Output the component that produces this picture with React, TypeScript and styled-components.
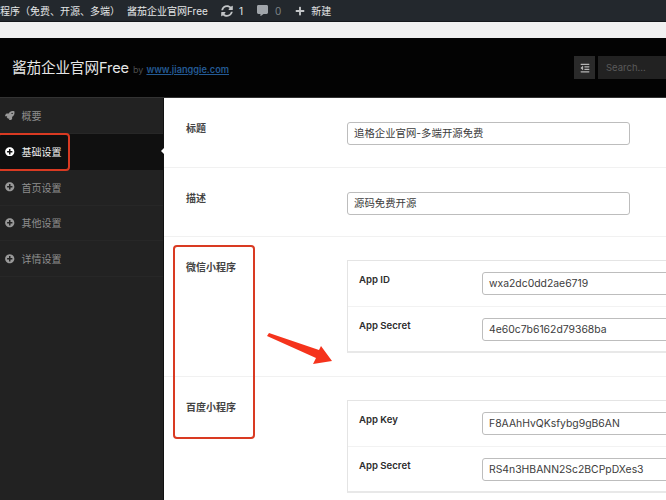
import React from 'react';
import styled, { createGlobalStyle } from 'styled-components';
import { FaRocket, FaPlusCircle, FaSyncAlt, FaCommentAlt, FaPlus, FaOutdent } from 'react-icons/fa';

const GlobalStyle = createGlobalStyle`
  html, body {
    margin: 0;
    padding: 0;
    background: #fff;
    overflow: hidden;
  }
  * {
    box-sizing: border-box;
  }
`;

const font = `Inter, "Noto Sans CJK SC", "Liberation Sans", sans-serif`;

const Page = styled.div`
  position: relative;
  width: 666px;
  height: 500px;
  overflow: hidden;
  font-family: ${font};
`;

const AdminBar = styled.div`
  height: 22px;
  background: #23282d;
  border-bottom: 1px solid #15181b;
  display: flex;
  align-items: center;
  color: #e4e6e7;
  font-size: 10px;
  white-space: nowrap;
`;

const BarItem = styled.span<{ $left: number; $dim?: boolean }>`
  display: flex;
  align-items: center;
  gap: ${(p) => (p.$dim ? 7 : 6)}px;
  margin-left: ${(p) => p.$left}px;
  color: ${(p) => (p.$dim ? '#7d8387' : '#e4e6e7')};
  svg {
    color: ${(p) => (p.$dim ? '#a0a5aa' : '#c3c6c8')};
  }
`;

const Strip = styled.div`
  height: 16px;
  background: #f1f1f1;
`;

const Header = styled.div`
  height: 60px;
  background: #030303;
  border-bottom: 1px solid #333;
  display: flex;
  align-items: center;
  padding: 0 0 0 12px;
  white-space: nowrap;
`;

const HeaderTitle = styled.div`
  display: flex;
  align-items: baseline;
  margin-top: -2px;
`;

const Brand = styled.span`
  color: #e6e6e6;
  font-size: 14.6px;
  letter-spacing: -0.1px;
`;

const By = styled.span`
  color: #4d4d4d;
  font-size: 9px;
  margin-left: 4px;
`;

const SiteLink = styled.a`
  color: #235a94;
  font-size: 9.2px;
  font-weight: 600;
  margin-left: 3px;
  text-decoration: underline;
`;

const SearchGroup = styled.div`
  margin-left: auto;
  display: flex;
  gap: 3px;
  height: 23px;
  width: 92px;
  flex-shrink: 0;
`;

const ToggleButton = styled.div`
  width: 21px;
  background: #2a2a2a;
  color: #b5b5b5;
  display: flex;
  align-items: center;
  justify-content: center;
  font-size: 10px;
`;

const SearchBox = styled.div`
  flex: 1;
  background: #222;
  color: #5a5a5a;
  font-size: 9.5px;
  line-height: 23px;
  padding-left: 8px;
`;

const Body = styled.div`
  display: flex;
  height: 402px;
`;

const Sidebar = styled.div`
  width: 164px;
  flex-shrink: 0;
  background: #222;
  border-right: 1px solid #111;
`;

const MenuItem = styled.div<{ $active?: boolean }>`
  position: relative;
  height: 35.85px;
  display: flex;
  align-items: center;
  gap: 7px;
  padding-left: 5px;
  font-size: 10px;
  background: ${(p) => (p.$active ? '#101010' : 'transparent')};
  color: ${(p) => (p.$active ? '#f2f2f2' : '#8e8e8e')};
  border-bottom: 1px solid ${(p) => (p.$active ? '#101010' : '#272727')};
  svg {
    color: ${(p) => (p.$active ? '#fff' : '#999')};
    font-size: 9.5px;
  }
  ${(p) =>
    p.$active &&
    `&::after {
      content: '';
      position: absolute;
      right: -1px;
      top: 50%;
      margin-top: -3px;
      border: 3px solid transparent;
      border-right-color: #fff;
    }`}
`;

const Content = styled.div`
  flex: 1;
  min-width: 0;
  background: #fff;
`;

const Row = styled.div<{ $height: number }>`
  height: ${(p) => p.$height}px;
  display: flex;
  align-items: flex-start;
  padding: 24px 0 0 22px;
  border-bottom: 1px solid #f1f1f1;
`;

const RowLabel = styled.div`
  width: 161px;
  flex-shrink: 0;
  margin-top: -1px;
  color: #444;
  font-size: 10px;
  font-weight: 600;
  line-height: 14px;
`;

const TextInput = styled.div<{ $width: number }>`
  width: ${(p) => p.$width}px;
  height: 23px;
  flex-shrink: 0;
  border: 1px solid #bdbdbd;
  border-radius: 3px;
  background: #fff;
  color: #3c3c3c;
  font-size: 10.4px;
  line-height: 21px;
  padding-left: 6px;
  white-space: nowrap;
`;

const Card = styled.div`
  width: 400px;
  flex-shrink: 0;
  margin-top: -1px;
  background: #fff;
  border: 1px solid #e4e4e4;
  border-bottom: 2px solid #e8e8e8;
`;

const CardRow = styled.div`
  height: 45px;
  display: flex;
  align-items: flex-start;
  padding: 11px 0 0 11px;
  & + & {
    border-top: 1px solid #f2f2f2;
  }
`;

const CardLabel = styled.div`
  width: 123px;
  flex-shrink: 0;
  margin-top: 1px;
  color: #2c2c2c;
  font-size: 9.6px;
  font-weight: 600;
  line-height: 14px;
`;

const Highlight = styled.div<{ $x: number; $y: number; $w: number; $h: number }>`
  position: absolute;
  left: ${(p) => p.$x}px;
  top: ${(p) => p.$y}px;
  width: ${(p) => p.$w}px;
  height: ${(p) => p.$h}px;
  border: 2px solid #d93a22;
  border-radius: 4px;
  pointer-events: none;
`;

const Arrow = styled.svg`
  position: absolute;
  left: 262px;
  top: 328px;
`;

const App: React.FC = () => {
  return (
    <Page>
      <GlobalStyle />
      <AdminBar>
        <BarItem $left={0}>程序（免费、开源、多端）</BarItem>
        <BarItem $left={7}>酱茄企业官网Free</BarItem>
        <BarItem $left={13}>
          <FaSyncAlt size={12} />1
        </BarItem>
        <BarItem $left={14} $dim>
          <FaCommentAlt size={11} />0
        </BarItem>
        <BarItem $left={14}>
          <FaPlus size={10} />新建
        </BarItem>
      </AdminBar>
      <Strip />
      <Header>
        <HeaderTitle>
          <Brand>酱茄企业官网Free</Brand>
          <By>by</By>
          <SiteLink>www.jianggie.com</SiteLink>
        </HeaderTitle>
        <SearchGroup>
          <ToggleButton>
            <FaOutdent />
          </ToggleButton>
          <SearchBox>Search...</SearchBox>
        </SearchGroup>
      </Header>
      <Body>
        <Sidebar>
          <MenuItem>
            <FaRocket />
            概要
          </MenuItem>
          <MenuItem $active>
            <FaPlusCircle />
            基础设置
          </MenuItem>
          <MenuItem>
            <FaPlusCircle />
            首页设置
          </MenuItem>
          <MenuItem>
            <FaPlusCircle />
            其他设置
          </MenuItem>
          <MenuItem>
            <FaPlusCircle />
            详情设置
          </MenuItem>
        </Sidebar>
        <Content>
          <Row $height={70}>
            <RowLabel>标题</RowLabel>
            <TextInput $width={283}>追格企业官网-多端开源免费</TextInput>
          </Row>
          <Row $height={69}>
            <RowLabel>描述</RowLabel>
            <TextInput $width={283}>源码免费开源</TextInput>
          </Row>
          <Row $height={140}>
            <RowLabel>微信小程序</RowLabel>
            <Card>
              <CardRow>
                <CardLabel>App ID</CardLabel>
                <TextInput $width={300}>wxa2dc0dd2ae6719</TextInput>
              </CardRow>
              <CardRow>
                <CardLabel>App Secret</CardLabel>
                <TextInput $width={300}>4e60c7b6162d79368ba</TextInput>
              </CardRow>
            </Card>
          </Row>
          <Row $height={124}>
            <RowLabel>百度小程序</RowLabel>
            <Card>
              <CardRow>
                <CardLabel>App Key</CardLabel>
                <TextInput $width={300}>F8AAhHvQKsfybg9gB6AN</TextInput>
              </CardRow>
              <CardRow>
                <CardLabel>App Secret</CardLabel>
                <TextInput $width={300}>RS4n3HBANN2Sc2BCPpDXes3</TextInput>
              </CardRow>
            </Card>
          </Row>
        </Content>
      </Body>
      <Highlight $x={-3} $y={133} $w={73} $h={38} />
      <Highlight $x={173} $y={245} $w={82} $h={194} />
      <Arrow width="76" height="40" viewBox="0 0 76 40">
        <path d="M5 8 L7 5 L57 22 L59 18 L70 33 L51 36 L54 30 Z" fill="#f5331c" />
      </Arrow>
    </Page>
  );
};

export default App;
